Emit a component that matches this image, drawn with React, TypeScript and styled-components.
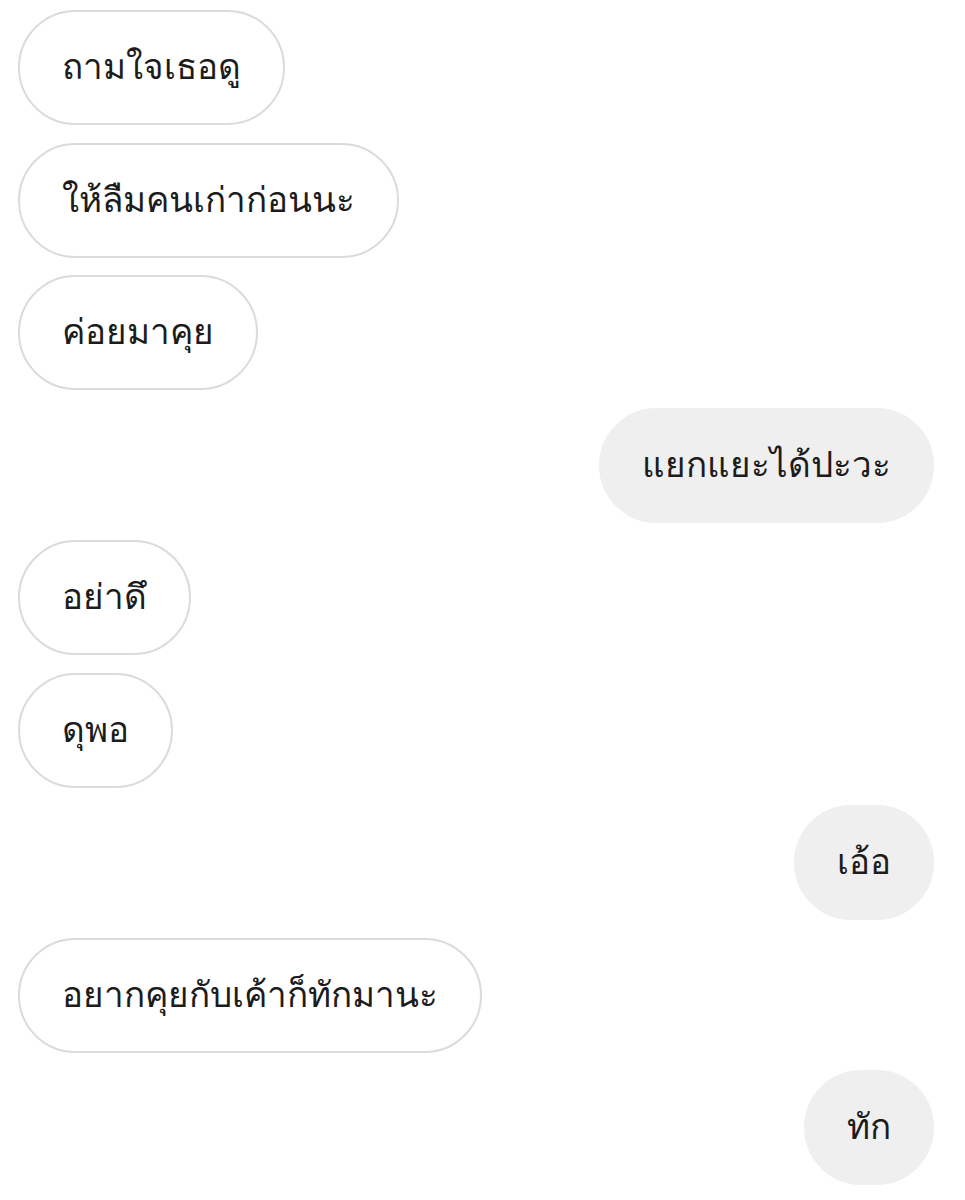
import React from "react";
import styled, { createGlobalStyle } from "styled-components";

const GlobalStyle = createGlobalStyle`
  html, body {
    margin: 0;
    padding: 0;
    background: #ffffff;
  }
  body {
    font-family: "DejaVu Sans", sans-serif;
  }
`;

const Thread = styled.div`
  width: 965px;
  height: 1200px;
  box-sizing: border-box;
  padding: 10px 31px 0 18px;
  display: flex;
  flex-direction: column;
  gap: 17.5px;
  overflow: hidden;
`;

interface BubbleProps {
  $mine?: boolean;
}

const Bubble = styled.div<BubbleProps>`
  align-self: ${(p) => (p.$mine ? "flex-end" : "flex-start")};
  box-sizing: border-box;
  height: 115px;
  display: inline-flex;
  align-items: center;
  padding: 0 ${(p) => (p.$mine ? "41px" : "42px")};
  border-radius: 58px;
  border: 2px solid ${(p) => (p.$mine ? "#efefef" : "#dbdbdb")};
  background: ${(p) => (p.$mine ? "#efefef" : "#ffffff")};
  color: #1c1c1c;
  font-size: 35px;
  line-height: 1;
  white-space: nowrap;
`;

const messages: { text: string; mine?: boolean }[] = [
  { text: "ถามใจเธอดู" },
  { text: "ให้ลืมคนเก่าก่อนนะ" },
  { text: "ค่อยมาคุย" },
  { text: "แยกแยะได้ปะวะ", mine: true },
  { text: "อย่าดึ" },
  { text: "ดุพอ" },
  { text: "เอ้อ", mine: true },
  { text: "อยากคุยกับเค้าก็ทักมานะ" },
  { text: "ทัก", mine: true },
];

export default function App() {
  return (
    <>
      <GlobalStyle />
      <Thread>
        {messages.map((m, i) => (
          <Bubble key={i} $mine={m.mine}>
            {m.text}
          </Bubble>
        ))}
      </Thread>
    </>
  );
}
